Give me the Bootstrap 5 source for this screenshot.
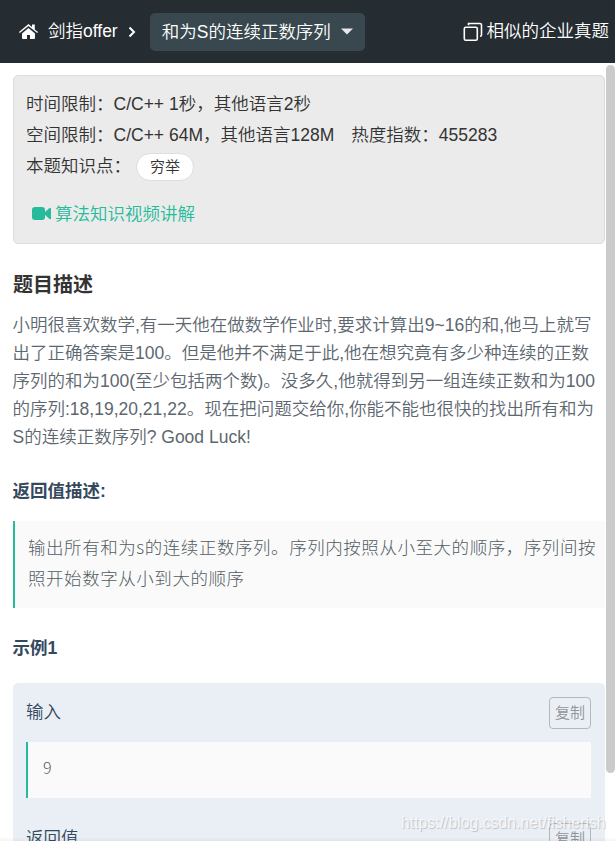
<!DOCTYPE html>
<html lang="zh-CN">
<head>
<meta charset="utf-8">
<meta name="viewport" content="width=device-width, initial-scale=1">
<title>和为S的连续正数序列</title>
<link href="https://cdn.jsdelivr.net/npm/bootstrap@5.3.0/dist/css/bootstrap.min.css" rel="stylesheet">
<style>
html, body { height: 841px; overflow: hidden; }
body { font-family: "Liberation Sans", "Noto Sans CJK SC", sans-serif; font-size: 17.5px; font-weight: 350; line-height: 31px; color: #333; background: #fff; }
button { font-weight: inherit; }
.topbar { height: 63px; background: #252c32; color: #fff; padding: 0 6px 0 19px; white-space: nowrap; }
.topbar a { color: #fff; text-decoration: none; }
.picker { width: 215px; height: 38px; background: #39474e; color: #fff; border: 0; border-radius: 5px; padding: 0 12px; font-size: 17.5px; line-height: 38px; margin-left: 13px; }
.crumb { margin-left: 10px; }
.content { height: 778px; overflow: hidden; padding: 12px 10px 0 13px; }
.limits { height: 169px; background: #ebebeb; border: 1px solid #dcdcdc; border-radius: 5px; padding: 13px 12px 0; white-space: nowrap; }
.heat { margin-left: 17px; }
.topic { height: 28px; border: 1px solid #dedede; border-radius: 14px; background: #fff; padding: 0 13px; font-size: 15px; line-height: 26px; margin-left: 5px; }
.video { color: #25bb9b; text-decoration: none; margin: 17px 0 0 6px; }
.video svg { margin-bottom: 2px; }
.title-main { font-size: 20px; line-height: 28px; margin: 27px 0 12px; }
.desc { color: #5d676f; line-height: 28px; margin: 0 0 26px -.5px; white-space: nowrap; }
.title-sub { font-size: 17.5px; line-height: 28px; color: #34495e; margin: 0 0 0 -.5px; }
.quote { background: #fafafa; border-left: 2px solid #25bb9b; color: #525c64; font-family: "Noto Sans CJK SC", sans-serif; font-weight: 300; white-space: nowrap; }
.result { height: 87px; padding: 10px 0 0 13px; margin: 16px 0 26px; letter-spacing: .55px; }
.sample { background: #eaeff6; border-radius: 5px; padding: 14px 14px 0 13px; margin-top: 21px; color: #34495e; height: 260px; }
.value { height: 56px; padding: 10px 0 0 15px; margin: 13px 0 25px; font-size: 16px; }
.copy { width: 42px; height: 32px; padding: 0; border: 1px solid #b4b8bb; border-radius: 4px; background: transparent; color: #8f9498; font-size: 15px; line-height: 30px; }
.scroll-thumb { position: absolute; right: 0; top: 65px; width: 9px; height: 708px; background: #cbcbcb; border-radius: 5px; }
.watermark { position: absolute; left: 401px; top: 812px; font-size: 15.8px; line-height: 22px; color: rgba(255,255,255,.75); text-shadow: 1px 1px 1px rgba(90,90,90,.3); white-space: nowrap; }
.fade-edge { position: absolute; left: 0; right: 0; bottom: 0; height: 4px; background: linear-gradient(rgba(0,0,0,0), rgba(0,0,0,.045)); }
</style>
</head>
<body class="position-relative">
<header class="topbar d-flex align-items-center">
  <a href="#" class="d-flex align-items-center">
    <svg width="19" height="16" viewBox="0 0 19 16" fill="#fff"><path d="M9.500 4 3 9.400V14q0 1 1 1h4v-4h3v4h4q1 0 1-1V9.400z"/><path d="M9.500 0 13 3V.6h2.800v4.800L19 8.100l-.8 1L9.500 2 .8 9.100l-.8-1z"/></svg>
  </a>
  <a href="#" class="crumb me-2">剑指offer</a>
  <svg width="11" height="12" viewBox="0 0 11 12" fill="none" stroke="#fff" stroke-width="2"><path d="m3.500 1.500 4.500 4.500-4.500 4.500"/></svg>
  <button class="picker d-flex align-items-center justify-content-between" type="button">和为S的连续正数序列
    <svg width="12" height="7" viewBox="0 0 12 7" fill="#e8e8ec"><path d="M0 .5h12L6 6.500z"/></svg>
  </button>
  <a href="#" class="d-flex align-items-center ms-auto">
    <svg class="me-1" width="20" height="20" viewBox="0 0 20 20" fill="none" stroke="#fff" stroke-width="1.600"><rect x="1.300" y="5.300" width="13" height="13" rx="1.500"/><path d="M5.500 3.200V1.500H17q1.500 0 1.500 1.500v10q0 1.300-1.500 1.300"/></svg>相似的企业真题</a>
</header>
<main class="content">
  <section class="limits">
    <div>时间限制：C/C++ 1秒，其他语言2秒</div>
    <div>空间限制：C/C++ 64M，其他语言128M<span class="heat">热度指数：455283</span></div>
    <div class="d-flex align-items-center">本题知识点：<span class="topic d-inline-block">穷举</span></div>
    <a class="video d-flex align-items-center" href="#">
      <svg class="me-1" width="19" height="14" viewBox="0 0 19 14" fill="#25bb9b"><rect width="13" height="13" rx="3"/><path d="m12 6 5.500-5q1.500-.7 1.500.6v9.800q0 1.300-1.500.6L12 7z"/></svg>算法知识视频讲解</a>
  </section>
  <h1 class="title-main fw-bold">题目描述</h1>
  <p class="desc">小明很喜欢数学,有一天他在做数学作业时,要求计算出9~16的和,他马上就写<br>出了正确答案是100。但是他并不满足于此,他在想究竟有多少种连续的正数<br>序列的和为100(至少包括两个数)。没多久,他就得到另一组连续正数和为100<br>的序列:18,19,20,21,22。现在把问题交给你,你能不能也很快的找出所有和为<br>S的连续正数序列? Good Luck!</p>
  <h2 class="title-sub fw-bold">返回值描述:</h2>
  <div class="quote result">输出所有和为s的连续正数序列。序列内按照从小至大的顺序，序列间按<br>照开始数字从小到大的顺序</div>
  <h2 class="title-sub fw-bold">示例1</h2>
  <section class="sample">
    <div class="d-flex justify-content-between"><span>输入</span><button class="copy" type="button">复制</button></div>
    <div class="quote value">9</div>
    <div class="d-flex justify-content-between"><span>返回值</span><button class="copy" type="button">复制</button></div>
  </section>
</main>
<div class="scroll-thumb"></div>
<div class="watermark">https://blog.csdn.net/fisherish</div>
<div class="fade-edge"></div>
<script src="https://cdn.jsdelivr.net/npm/bootstrap@5.3.0/dist/js/bootstrap.bundle.min.js"></script>
</body>
</html>
